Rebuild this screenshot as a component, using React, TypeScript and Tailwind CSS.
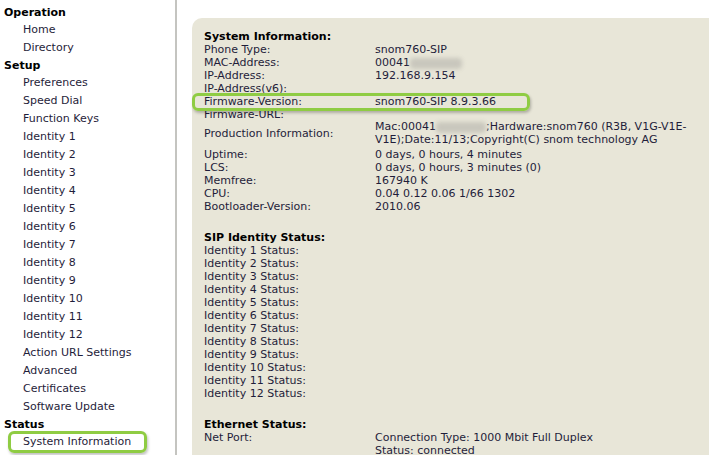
import React from "react"

const menu: { title: string; items: string[] }[] = [
  { title: "Operation", items: ["Home", "Directory"] },
  {
    title: "Setup",
    items: [
      "Preferences",
      "Speed Dial",
      "Function Keys",
      "Identity 1",
      "Identity 2",
      "Identity 3",
      "Identity 4",
      "Identity 5",
      "Identity 6",
      "Identity 7",
      "Identity 8",
      "Identity 9",
      "Identity 10",
      "Identity 11",
      "Identity 12",
      "Action URL Settings",
      "Advanced",
      "Certificates",
      "Software Update",
    ],
  },
  { title: "Status", items: ["System Information"] },
]

// greyed-out part of the MAC address
function Blur({ w }: { w: string }) {
  return <span className={`inline-block align-middle h-[11px] ${w} bg-[#c9c7bd] blur-[2px] rounded-sm`} />
}

function Row({ label, children, tall }: { label: string; children?: React.ReactNode; tall?: boolean }) {
  return (
    <div className={`flex ${tall ? "items-center -mt-[1px] mb-[2px]" : ""}`}>
      <div className="w-[171px] shrink-0">{label}</div>
      <div className="flex-1">{children}</div>
    </div>
  )
}

function Sidebar() {
  return (
    <div className="w-[177px] shrink-0 border-r-2 border-[#c4c4c0] pt-[4px] pl-[4px]">
      {menu.map((s) => (
        <div key={s.title}>
          <div className="font-bold text-black leading-[17px]">{s.title}</div>
          {s.items.map((it) =>
            it === "System Information" ? (
              <div key={it} className="relative leading-[18px] pl-[19px]">
                <span className="absolute left-[4px] -top-[2px] w-[139px] h-[22px] border-[3px] border-[#8fcc43] rounded-[6px] shadow-[1px_2px_3px_rgba(0,0,0,0.25)]" />
                <span className="relative">{it}</span>
              </div>
            ) : (
              <div key={it} className="leading-[18px] pl-[19px]">
                {it}
              </div>
            )
          )}
        </div>
      ))}
    </div>
  )
}

export default function App() {
  return (
    <div className="flex w-[709px] h-[455px] overflow-hidden bg-white text-[11px] text-[#1f1d3a] font-['DejaVu_Sans',Verdana,sans-serif]">
      <Sidebar />
      <div className="flex-1 pl-[15px] pt-[18px]">
        <div className="bg-[#e8e6d8] rounded-tl-[10px] h-full pl-[12px] pt-[12px] leading-[13px] w-[540px]">
          <div className="font-bold text-black">System Information:</div>
          <Row label="Phone Type:">snom760-SIP</Row>
          <Row label="MAC-Address:">
            00041<Blur w="w-[52px]" />
          </Row>
          <Row label="IP-Address:">192.168.9.154</Row>
          <Row label="IP-Address(v6):" />
          <div className="relative">
            <span className="absolute -left-[12px] -top-[2px] w-[338px] h-[18px] border-[3px] border-[#8fcc43] rounded-[6px] shadow-[1px_2px_3px_rgba(0,0,0,0.25)]" />
            <div className="relative">
              <Row label="Firmware-Version:">snom760-SIP 8.9.3.66</Row>
            </div>
          </div>
          <Row label="Firmware-URL:" />
          <Row label="Production Information:" tall>
            <div>
              Mac:00041<Blur w="w-[50px]" />;Hardware:snom760 (R3B, V1G-V1E-
            </div>
            <div>V1E);Date:11/13;Copyright(C) snom technology AG</div>
          </Row>
          <Row label="Uptime:">0 days, 0 hours, 4 minutes</Row>
          <Row label="LCS:">0 days, 0 hours, 3 minutes (0)</Row>
          <Row label="Memfree:">167940 K</Row>
          <Row label="CPU:">0.04 0.12 0.06 1/66 1302</Row>
          <Row label="Bootloader-Version:">2010.06</Row>

          <div className="font-bold text-black mt-[18px]">SIP Identity Status:</div>
          {Array.from({ length: 12 }, (_, i) => (
            <Row key={i} label={`Identity ${i + 1} Status:`} />
          ))}

          <div className="font-bold text-black mt-[18px]">Ethernet Status:</div>
          <Row label="Net Port:">
            <div>Connection Type: 1000 Mbit Full Duplex</div>
            <div>Status: connected</div>
          </Row>
        </div>
      </div>
    </div>
  )
}
